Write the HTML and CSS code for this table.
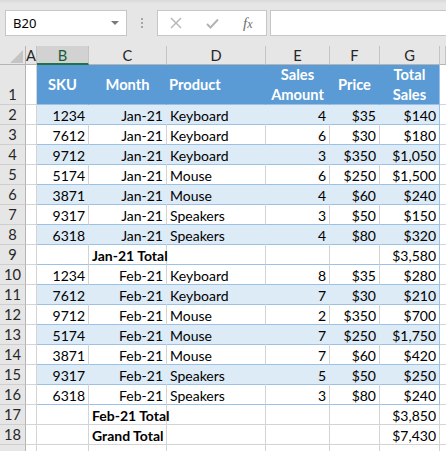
FILE: index.html
```html
<!DOCTYPE html>
<html>
<head>
<meta charset="utf-8">
<link rel="stylesheet" href="styles.css">
</head>
<body>
<div class="fbar">
  <div class="namebox"><span>B20</span><svg class="dd" width="8" height="4" viewBox="0 0 8 4"><path d="M0 0H8L4 4Z" fill="#7a7a7a"/></svg></div>
  <div class="grip"><i></i><i></i><i></i></div>
  <div class="fbtns">
    <svg width="12" height="12" viewBox="0 0 12 12"><path d="M1 1L11 11M11 1L1 11" stroke="#b4b4b4" stroke-width="1.4" fill="none"/></svg>
    <svg width="13" height="11" viewBox="0 0 13 11"><path d="M1 6L4.5 9.5L12 1.5" stroke="#b4b4b4" stroke-width="2" fill="none"/></svg>
    <span class="fx"><i>f</i><i class="x">x</i></span>
  </div>
  <div class="finput"></div>
</div>
<div class="sheet">
  <div class="row hdr">
    <div class="corner"><svg width="26" height="19" viewBox="0 0 26 19"><path d="M10 17H23V4Z" fill="#c4c4c4"/></svg></div>
    <div class="ch">A</div><div class="ch sel">B</div><div class="ch">C</div><div class="ch">D</div><div class="ch">E</div><div class="ch">F</div><div class="ch">G</div><div class="ch"></div>
  </div>
  <div class="row th">
    <div class="rh tall">1</div><div class="c"></div>
    <div class="c t">SKU</div><div class="c t">Month</div><div class="c t left">Product</div><div class="c t">Sales<br>Amount</div><div class="c t">Price</div><div class="c t g">Total<br>Sales</div><div class="c"></div>
  </div>
  <div class="row tb band"><div class="rh">2</div><div class="c"></div><div class="c t r">1234</div><div class="c t r">Jan-21</div><div class="c t">Keyboard</div><div class="c t r">4</div><div class="c t r">$35</div><div class="c t r g">$140</div><div class="c"></div></div>
  <div class="row tb"><div class="rh">3</div><div class="c"></div><div class="c t r">7612</div><div class="c t r">Jan-21</div><div class="c t">Keyboard</div><div class="c t r">6</div><div class="c t r">$30</div><div class="c t r g">$180</div><div class="c"></div></div>
  <div class="row tb band"><div class="rh">4</div><div class="c"></div><div class="c t r">9712</div><div class="c t r">Jan-21</div><div class="c t">Keyboard</div><div class="c t r">3</div><div class="c t r">$350</div><div class="c t r g">$1,050</div><div class="c"></div></div>
  <div class="row tb"><div class="rh">5</div><div class="c"></div><div class="c t r">5174</div><div class="c t r">Jan-21</div><div class="c t">Mouse</div><div class="c t r">6</div><div class="c t r">$250</div><div class="c t r g">$1,500</div><div class="c"></div></div>
  <div class="row tb band"><div class="rh">6</div><div class="c"></div><div class="c t r">3871</div><div class="c t r">Jan-21</div><div class="c t">Mouse</div><div class="c t r">4</div><div class="c t r">$60</div><div class="c t r g">$240</div><div class="c"></div></div>
  <div class="row tb"><div class="rh">7</div><div class="c"></div><div class="c t r">9317</div><div class="c t r">Jan-21</div><div class="c t">Speakers</div><div class="c t r">3</div><div class="c t r">$50</div><div class="c t r g">$150</div><div class="c"></div></div>
  <div class="row tb band"><div class="rh">8</div><div class="c"></div><div class="c t r">6318</div><div class="c t r">Jan-21</div><div class="c t">Speakers</div><div class="c t r">4</div><div class="c t r">$80</div><div class="c t r g">$320</div><div class="c"></div></div>
  <div class="row tb"><div class="rh">9</div><div class="c"></div><div class="c t"></div><div class="c t b">Jan-21 Total</div><div class="c t"></div><div class="c t"></div><div class="c t"></div><div class="c t r g">$3,580</div><div class="c"></div></div>
  <div class="row tb"><div class="rh">10</div><div class="c"></div><div class="c t r">1234</div><div class="c t r">Feb-21</div><div class="c t">Keyboard</div><div class="c t r">8</div><div class="c t r">$35</div><div class="c t r g">$280</div><div class="c"></div></div>
  <div class="row tb band"><div class="rh">11</div><div class="c"></div><div class="c t r">7612</div><div class="c t r">Feb-21</div><div class="c t">Keyboard</div><div class="c t r">7</div><div class="c t r">$30</div><div class="c t r g">$210</div><div class="c"></div></div>
  <div class="row tb"><div class="rh">12</div><div class="c"></div><div class="c t r">9712</div><div class="c t r">Feb-21</div><div class="c t">Mouse</div><div class="c t r">2</div><div class="c t r">$350</div><div class="c t r g">$700</div><div class="c"></div></div>
  <div class="row tb band"><div class="rh">13</div><div class="c"></div><div class="c t r">5174</div><div class="c t r">Feb-21</div><div class="c t">Mouse</div><div class="c t r">7</div><div class="c t r">$250</div><div class="c t r g">$1,750</div><div class="c"></div></div>
  <div class="row tb"><div class="rh">14</div><div class="c"></div><div class="c t r">3871</div><div class="c t r">Feb-21</div><div class="c t">Mouse</div><div class="c t r">7</div><div class="c t r">$60</div><div class="c t r g">$420</div><div class="c"></div></div>
  <div class="row tb band"><div class="rh">15</div><div class="c"></div><div class="c t r">9317</div><div class="c t r">Feb-21</div><div class="c t">Speakers</div><div class="c t r">5</div><div class="c t r">$50</div><div class="c t r g">$250</div><div class="c"></div></div>
  <div class="row tb"><div class="rh">16</div><div class="c"></div><div class="c t r">6318</div><div class="c t r">Feb-21</div><div class="c t">Speakers</div><div class="c t r">3</div><div class="c t r">$80</div><div class="c t r g">$240</div><div class="c"></div></div>
  <div class="row"><div class="rh">17</div><div class="c"></div><div class="c"></div><div class="c b">Feb-21 Total</div><div class="c"></div><div class="c"></div><div class="c"></div><div class="c r">$3,850</div><div class="c"></div></div>
  <div class="row"><div class="rh">18</div><div class="c"></div><div class="c"></div><div class="c b">Grand Total</div><div class="c"></div><div class="c"></div><div class="c"></div><div class="c r">$7,430</div><div class="c"></div></div>
  <div class="row"><div class="rh"></div><div class="c"></div><div class="c"></div><div class="c"></div><div class="c"></div><div class="c"></div><div class="c"></div><div class="c"></div><div class="c"></div></div>
</div>
</body>
</html>
```

FILE: styles.css
```css
html, body {
  margin: 0;
  padding: 0;
}
body {
  width: 446px;
  height: 451px;
  overflow: hidden;
  background: #fff;
  font-family: Lato, "Liberation Sans", sans-serif;
  color: #000;
}
.fbar {
  height: 46px;
  box-sizing: border-box;
  padding: 10px 0 0 5px;
  display: flex;
  align-items: flex-start;
  background: linear-gradient(#d9d9d9 0, #e6e6e6 4px, #e6e6e6 100%);
}
.namebox {
  width: 122px;
  height: 26px;
  flex: none;
  box-sizing: border-box;
  border: 1px solid #c6c6c6;
  background: #fff;
  display: flex;
  align-items: center;
  justify-content: space-between;
  padding: 0 7px 0 7px;
  font: 13px "Noto Sans", sans-serif;
  color: #000;
}
.grip {
  width: 30px;
  height: 26px;
  flex: none;
  display: flex;
  flex-direction: column;
  align-items: center;
  justify-content: center;
  gap: 2px;
}
.grip i {
  display: block;
  width: 2px;
  height: 2px;
  background: #a6a6a6;
}
.fbtns {
  width: 110px;
  height: 26px;
  flex: none;
  box-sizing: border-box;
  border: 1px solid #c6c6c6;
  background: #fff;
  display: flex;
  align-items: center;
  padding-left: 12px;
  gap: 24px;
}
.fx {
  font-family: "Liberation Serif", serif;
  font-style: italic;
  font-size: 15px;
  color: #6e6e6e;
  line-height: 1;
}
.fx i { font-style: italic; }
.fx .x { font-size: 12px; }
.finput {
  flex: 1;
  height: 26px;
  box-sizing: border-box;
  margin-left: 3px;
  margin-right: -5px;
  border: 1px solid #c6c6c6;
  background: #fff;
}
.sheet {
  display: grid;
  grid-template-columns: 26px 11px 52px 78px 99px 64px 50px 60px 6px;
  grid-template-rows: 19px 40px repeat(18, 20px);
  font-size: 14px;
}
.row { display: contents; }
.corner {
  background: #e6e6e6;
  border-right: 1px solid #b4b4b4;
  border-bottom: 1px solid #b4b4b4;
  box-sizing: border-box;
}
.corner svg { display: block; }
.ch {
  background: #e6e6e6;
  box-sizing: border-box;
  border-right: 1px solid #c4c4c4;
  border-bottom: 1px solid #b4b4b4;
  text-align: center;
  line-height: 19px;
  font-size: 14.67px;
  color: #262626;
}
.ch.sel {
  background: #d2d2d2;
  border-bottom: 2px solid #217346;
  color: #185c37;
}
.rh {
  background: #e6e6e6;
  box-sizing: border-box;
  border-right: 1px solid #b4b4b4;
  border-bottom: 1px solid #cfcfcf;
  text-align: center;
  line-height: 19px;
  font-size: 14.67px;
  color: #262626;
}
.rh.tall {
  display: flex;
  align-items: flex-end;
  justify-content: center;
}
.c {
  box-sizing: border-box;
  border-right: 1px solid #d4d4d4;
  border-bottom: 1px solid #d4d4d4;
  padding: 1px 3px 0;
  line-height: 19px;
  white-space: nowrap;
}
.r { text-align: right; }
.b { font-weight: bold; }
.th .t {
  background: #5b9bd5;
  border-right-color: #5b9bd5;
  border-bottom-color: #9bc2e6;
  color: #fff;
  font-weight: bold;
  font-size: 14.67px;
  display: flex;
  align-items: center;
  justify-content: center;
  text-align: center;
  line-height: 20px;
  padding: 0 2px;
}
.th .t.left { justify-content: flex-start; }
.th .t.g { border-right-color: #9bc2e6; }
.tb .t { border-bottom-color: #9bc2e6; }
.band .t {
  background: #ddebf7;
  border-right-color: #ddebf7;
}
.tb .t.g { border-right-color: #9bc2e6; }
```
